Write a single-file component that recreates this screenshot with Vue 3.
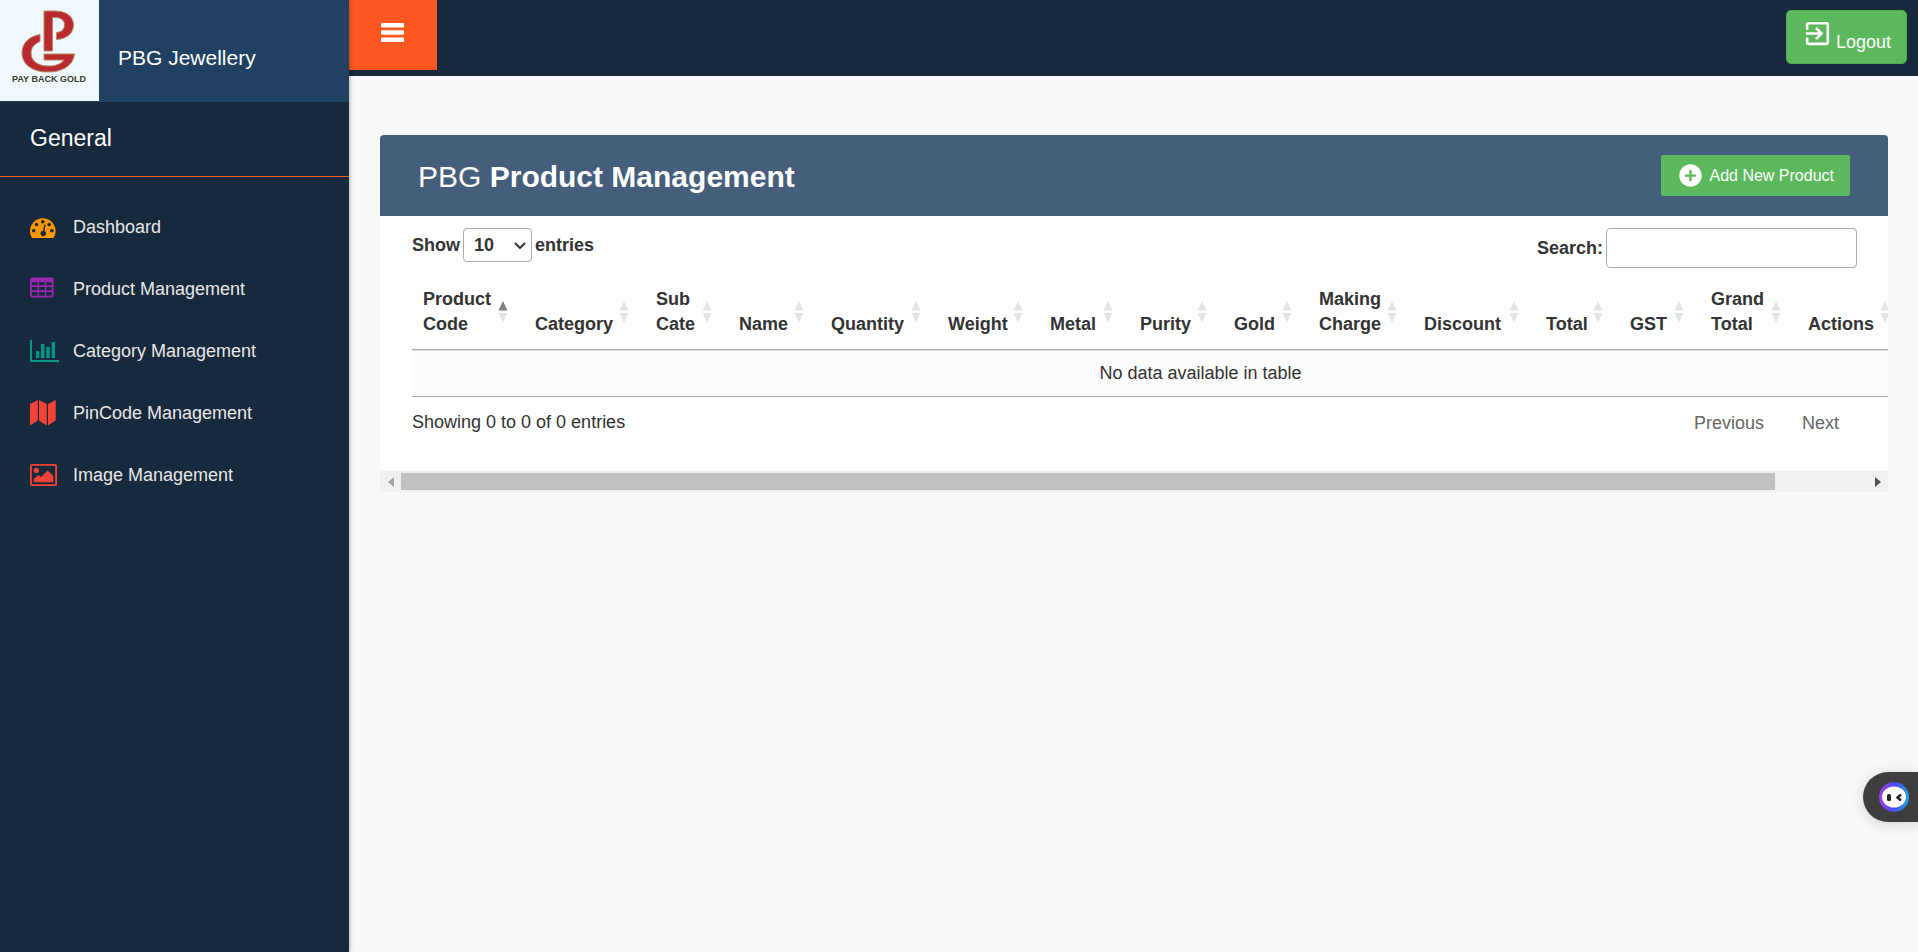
<script setup>
import { ref } from 'vue'

const navItems = [
  { label: 'Dashboard', icon: 'gauge', color: '#ff9800' },
  { label: 'Product Management', icon: 'grid', color: '#9c27b0' },
  { label: 'Category Management', icon: 'chart', color: '#009688' },
  { label: 'PinCode Management', icon: 'map', color: '#f44336' },
  { label: 'Image Management', icon: 'image', color: '#f44336' },
]

const columns = [
  { label: 'Product Code', width: 112 },
  { label: 'Category', width: 121 },
  { label: 'Sub Cate', width: 83 },
  { label: 'Name', width: 92 },
  { label: 'Quantity', width: 117 },
  { label: 'Weight', width: 102 },
  { label: 'Metal', width: 90 },
  { label: 'Purity', width: 94 },
  { label: 'Gold', width: 85 },
  { label: 'Making Charge', width: 105 },
  { label: 'Discount', width: 122 },
  { label: 'Total', width: 84 },
  { label: 'GST', width: 81 },
  { label: 'Grand Total', width: 97 },
  { label: 'Actions', width: 109 },
  { label: '', width: 83 },
]

const scroller = ref(null)
const pageSize = ref('10')
const query = ref('')

function scrollTable(step) {
  scroller.value.scrollLeft += step
}
</script>

<template>
  <div class="layout">
    <aside class="sidebar">
      <div class="brand">
        <svg class="logo" viewBox="0 0 99 101" role="img" aria-label="Pay Back Gold">
          <g fill="#b9292f" stroke="#b58a5a" stroke-width="1">
            <path d="M44 11H55C67 11 73.500 17 73.500 25C73.500 33 67 39 56.500 39.500V32.500C62 32 64.500 29 64.500 25C64.500 20 61 17.500 55 17.500H52.500V51H44Z" />
            <path d="M40 34.500V41.500C34 44 31 48 31 53C31 61 38 66 48 66C56 66 61 64 64 60H44V54H74.500C73 66 62 72 48 72C32 72 22 64 22 53C22 43 29 36.500 40 34.500Z" />
          </g>
          <text x="49" y="82" text-anchor="middle">PAY BACK GOLD</text>
        </svg>
        <span class="brand-name">PBG Jewellery</span>
      </div>
      <h2 class="section-title">General</h2>
      <nav>
        <ul class="nav-list">
          <li v-for="item in navItems" :key="item.label">
            <a href="#" class="nav-link">
              <svg class="nav-icon" viewBox="0 0 30 30" :fill="item.color" aria-hidden="true">
                <path
                  v-if="item.icon === 'gauge'"
                  fill-rule="evenodd"
                  d="M2.200 26C.8 24 0 21.500 0 19A12.800 12.800 0 0 1 25.600 19C25.600 21.500 24.800 24 23.400 26ZM3.700 17A1.800 1.800 0 1 0 3.700 20.600A1.800 1.800 0 1 0 3.700 17ZM6.500 10.700A1.800 1.800 0 1 0 6.500 14.300A1.800 1.800 0 1 0 6.500 10.700ZM12.800 8A1.800 1.800 0 1 0 12.800 11.600A1.800 1.800 0 1 0 12.800 8ZM19.100 10.700A1.800 1.800 0 1 0 19.100 14.300A1.800 1.800 0 1 0 19.100 10.700ZM21.900 17A1.800 1.800 0 1 0 21.900 20.600A1.800 1.800 0 1 0 21.900 17ZM14.200 13L13.100 18.700A2.800 2.800 0 1 0 14.500 19L15.600 13.300A.7 .7 0 0 0 14.200 13Z"
                />
                <path
                  v-else-if="item.icon === 'grid'"
                  fill-rule="evenodd"
                  d="M2 3.500H21.500A2 2 0 0 1 23.500 5.500V21.500A2 2 0 0 1 21.500 23.500H2A2 2 0 0 1 0 21.500V5.500A2 2 0 0 1 2 3.500ZM1.800 8.200V11.200H7.500V8.200ZM9 8.200V11.200H14.800V8.200ZM16.200 8.200V11.200H21.800V8.200ZM1.800 13V16.200H7.500V13ZM9 13V16.200H14.800V13ZM16.200 13V16.200H21.800V13ZM1.800 18V21.800H7.500V18ZM9 18V21.800H14.800V18ZM16.200 18V21.800H21.800V18Z"
                />
                <path
                  v-else-if="item.icon === 'chart'"
                  d="M0 4H2V24H29V26H0ZM6 15H9.300V22H6ZM11 8H14.500V22H11ZM16.300 11H19.800V22H16.300ZM21.700 6H25V22H21.700Z"
                />
                <path
                  v-else-if="item.icon === 'map'"
                  d="M0 6L7.800 2V22.500L0 27.500ZM9 2L16.800 6V27.500L9 22.500ZM18 6L25.700 2V22.500L18 27.500Z"
                />
                <path
                  v-else
                  fill-rule="evenodd"
                  d="M2 4H25A2 2 0 0 1 27 6V24A2 2 0 0 1 25 26H2A2 2 0 0 1 0 24V6A2 2 0 0 1 2 4ZM1.800 5.800V24.200H25.200V5.800ZM6.300 7.700A2.700 2.700 0 1 1 6.300 13.100A2.700 2.700 0 1 1 6.300 7.700ZM3.700 22.300V19L8.300 15L11 17L17.700 10.500L23.300 16V22.300Z"
                />
              </svg>
              <span>{{ item.label }}</span>
            </a>
          </li>
        </ul>
      </nav>
    </aside>

    <div class="content">
      <header class="topbar">
        <button class="menu-button" type="button" aria-label="Toggle menu">
          <svg viewBox="0 0 23 19" aria-hidden="true">
            <rect width="23" height="4.500" rx="1" />
            <rect y="7.300" width="23" height="4.500" rx="1" />
            <rect y="14.500" width="23" height="4.500" rx="1" />
          </svg>
        </button>
        <button class="logout" type="button">
          <svg viewBox="0 0 24 24" aria-hidden="true">
            <path d="M10.090 15.590L11.500 17l5-5-5-5-1.410 1.410L12.670 11H3v2h9.670l-2.580 2.590zM19 3H5c-1.110 0-2 .9-2 2v4h2V5h14v14H5v-4H3v4c0 1.100.89 2 2 2h14c1.100 0 2-.9 2-2V5c0-1.100-.9-2-2-2z" />
          </svg>
          <span>Logout</span>
        </button>
      </header>

      <main class="page">
        <section class="card">
          <div class="card-header">
            <h1>PBG <b>Product Management</b></h1>
            <button class="add-button" type="button">
              <svg viewBox="0 0 24 24" aria-hidden="true">
                <path d="M12 2C6.480 2 2 6.480 2 12s4.480 10 10 10 10-4.480 10-10S17.520 2 12 2zm5 11h-4v4h-2v-4H7v-2h4V7h2v4h4v2z" />
              </svg>
              <span>Add New Product</span>
            </button>
          </div>

          <div class="card-body">
            <div class="controls">
              <div class="length">
                <label for="page-size">Show</label>
                <span class="select-box">
                  <select id="page-size" v-model="pageSize">
                    <option>10</option>
                    <option>25</option>
                    <option>50</option>
                    <option>100</option>
                  </select>
                  <svg viewBox="0 0 12 8" aria-hidden="true"><path d="M1 1L6 6L11 1" /></svg>
                </span>
                <label for="page-size">entries</label>
              </div>
              <div class="search">
                <label for="search">Search:</label>
                <input id="search" v-model="query" type="search" />
              </div>
            </div>

            <div ref="scroller" class="scroller">
              <table>
                <colgroup>
                  <col v-for="(col, i) in columns" :key="i" :style="{ width: col.width + 'px' }" />
                </colgroup>
                <thead>
                  <tr>
                    <th v-for="(col, i) in columns" :key="i" scope="col">
                      {{ col.label }}
                      <svg class="sort" :class="{ asc: i === 0 }" viewBox="0 0 10 22" aria-hidden="true">
                        <path class="up" d="M5 0L9.500 9.500H.5Z" />
                        <path d="M.5 12H9.500L5 21.500Z" />
                      </svg>
                    </th>
                  </tr>
                </thead>
                <tbody>
                  <tr>
                    <td :colspan="columns.length">No data available in table</td>
                  </tr>
                </tbody>
              </table>
            </div>

            <div class="footer-row">
              <span>Showing 0 to 0 of 0 entries</span>
              <div class="pager">
                <button type="button">Previous</button>
                <button type="button">Next</button>
              </div>
            </div>
          </div>

          <div class="scrollbar">
            <button type="button" class="arrow" aria-label="Scroll left" @click="scrollTable(-50)">
              <svg viewBox="0 0 6 10" aria-hidden="true"><path d="M6 0V10L0 5Z" fill="#a3a3a3" /></svg>
            </button>
            <div class="track"><div class="thumb"></div></div>
            <button type="button" class="arrow" aria-label="Scroll right" @click="scrollTable(50)">
              <svg viewBox="0 0 6 10" aria-hidden="true"><path d="M0 0V10L6 5Z" fill="#505050" /></svg>
            </button>
          </div>
        </section>
      </main>
    </div>

    <button class="assistant" type="button" aria-label="Open assistant">
      <svg viewBox="0 0 30 30" aria-hidden="true">
        <defs>
          <linearGradient id="ring" x1="0" y1="0.600" x2="1" y2="0.700">
            <stop offset="0" stop-color="#a33be8" />
            <stop offset="0.500" stop-color="#4a49f2" />
            <stop offset="1" stop-color="#25a5dc" />
          </linearGradient>
        </defs>
        <circle cx="15" cy="15" r="15" fill="url(#ring)" />
        <ellipse cx="15" cy="15" rx="12" ry="10.500" fill="#fff" />
        <rect x="8" y="12" width="4" height="7" rx="1.500" fill="#222" />
        <path d="M22 12.500L18.500 15.500L22 18.500" fill="none" stroke="#222" stroke-width="2.400" />
      </svg>
    </button>
  </div>
</template>

<style>
body {
  background: #f8f8f8;
}
</style>

<style scoped>
* {
  box-sizing: border-box;
}
.layout {
  display: flex;
  min-height: 100vh;
  font-family: "Liberation Sans", Arial, sans-serif;
  font-size: 18px;
  line-height: 25px;
  color: #333;
}
button,
input,
select {
  font: inherit;
  color: inherit;
}
button {
  border: 0;
  padding: 0;
  background: none;
  cursor: pointer;
}

/* Sidebar */
.sidebar {
  flex: 0 0 349px;
  position: relative;
  background: #17293c;
  box-shadow: 0 0 5px rgba(0, 0, 0, 0.4);
}
.brand {
  display: flex;
  align-items: flex-start;
  height: 102px;
  background: #214162;
  color: #fff;
}
.logo {
  width: 99px;
  height: 101px;
  background: aliceblue;
}
.logo text {
  font-size: 9px;
  font-weight: bold;
  fill: #3d3a2c;
}
.brand-name {
  margin: 45px 0 0 19px;
  font-size: 21px;
}
.section-title {
  margin: 0;
  padding: 24px 30px 25px;
  border-bottom: 1px solid #ff5722;
  font-size: 23px;
  font-weight: normal;
  color: #fff;
}
.nav-list {
  margin: 0;
  padding: 19px 0 0;
  list-style: none;
}
.nav-link {
  display: flex;
  align-items: center;
  gap: 13px;
  height: 62px;
  padding: 0 30px;
  color: #e7e7e7;
  text-decoration: none;
}
.nav-icon {
  width: 30px;
  height: 30px;
}

/* Top bar */
.content {
  flex: 1;
  min-width: 0;
}
.topbar {
  display: flex;
  justify-content: space-between;
  align-items: flex-start;
  height: 76px;
  background: #17293c;
  color: #fff;
}
.menu-button {
  width: 88px;
  height: 70px;
  padding: 0 1px 5px 0;
  background: #ff5722;
}
.menu-button svg {
  display: block;
  width: 23px;
  height: 19px;
  margin: 0 auto;
  fill: #fff;
}
.logout {
  display: flex;
  gap: 3px;
  height: 54px;
  margin: 10px 11px 0 0;
  padding: 7px 15px 8px;
  border: 1px solid #4cae4c;
  border-radius: 5px;
  background: #5cb85c;
}
.logout svg {
  width: 31px;
  height: 31px;
  fill: #fff;
}
.logout span {
  align-self: flex-end;
}

/* Card */
.page {
  padding: 59px 30px 30px 31px;
}
.card-header {
  display: flex;
  justify-content: space-between;
  align-items: center;
  height: 81px;
  padding: 0 38px;
  border-radius: 4px 4px 0 0;
  background: #445e7c;
  color: #fff;
}
h1 {
  margin: 0;
  padding-top: 3px;
  font-size: 30px;
  font-weight: normal;
  line-height: 34px;
}
.add-button {
  display: flex;
  align-items: center;
  gap: 5px;
  height: 41px;
  padding: 0 16px;
  border-radius: 2px;
  background: #5cb85c;
  font-size: 16px;
}
.add-button svg {
  width: 27px;
  height: 27px;
  fill: #fff;
}
.card-body {
  padding: 12px 0 36px 32px;
  border-radius: 0 0 4px 4px;
  background: #fff;
}
.controls {
  display: flex;
  justify-content: space-between;
  align-items: flex-start;
  padding-right: 31px;
  font-weight: bold;
}
.length,
.search {
  display: flex;
  align-items: center;
  gap: 3px;
}
.select-box {
  position: relative;
  display: flex;
}
select {
  appearance: none;
  width: 69px;
  height: 34px;
  padding: 0 10px;
  border: 1px solid #aaa;
  border-radius: 4px;
  background: #fff;
}
.select-box svg {
  position: absolute;
  right: 6px;
  top: 14px;
  width: 12px;
  height: 8px;
  fill: none;
  stroke: #333;
  stroke-width: 2;
  pointer-events: none;
}
.search input {
  width: 251px;
  height: 40px;
  padding: 6px;
  border: 1px solid #aaa;
  border-radius: 4px;
  background: #fff;
}
.scroller {
  margin-top: 6px;
  overflow-x: auto;
  scrollbar-width: none;
}
table {
  table-layout: fixed;
  width: 1577px;
  border-collapse: separate;
  border-spacing: 0;
  border-bottom: 1px solid #aaa;
}
th {
  position: relative;
  padding: 13px 31px 12px 11px;
  border-bottom: 1px solid #aaa;
  text-align: left;
  vertical-align: bottom;
}
.sort {
  position: absolute;
  right: 16px;
  top: 50%;
  width: 10px;
  height: 22px;
  margin-top: -11px;
  fill: #e4e4e4;
}
.sort.asc .up {
  fill: #808080;
}
td {
  padding: 10px;
  border-top: 1px solid #ddd;
  background: #fcfcfc;
  text-align: center;
}
.footer-row {
  display: flex;
  justify-content: space-between;
  padding: 13px 31px 0 0;
}
.card-body {
  padding-bottom: 35px;
}
.pager {
  display: flex;
  gap: 2px;
  padding-top: 1px;
}
.pager button {
  padding: 0 18px;
  color: #666;
}

/* Horizontal scrollbar */
.scrollbar {
  display: flex;
  height: 21px;
  background: #f0f0f0;
}
.arrow {
  display: flex;
  align-items: center;
  justify-content: center;
  width: 21px;
}
.arrow svg {
  width: 6px;
  height: 10px;
}
.track {
  flex: 1;
  padding: 2px 0;
}
.thumb {
  width: 93.7%;
  height: 17px;
  background: #c1c1c1;
}

/* Floating assistant tab */
.assistant {
  position: fixed;
  right: 0;
  bottom: 130px;
  display: flex;
  align-items: center;
  width: 55px;
  height: 50px;
  padding-left: 16px;
  border-radius: 25px 0 0 25px;
  background: #3c3e40;
  box-shadow: 0 2px 14px rgba(0, 0, 0, 0.15);
}
.assistant svg {
  width: 30px;
  height: 30px;
}
</style>
